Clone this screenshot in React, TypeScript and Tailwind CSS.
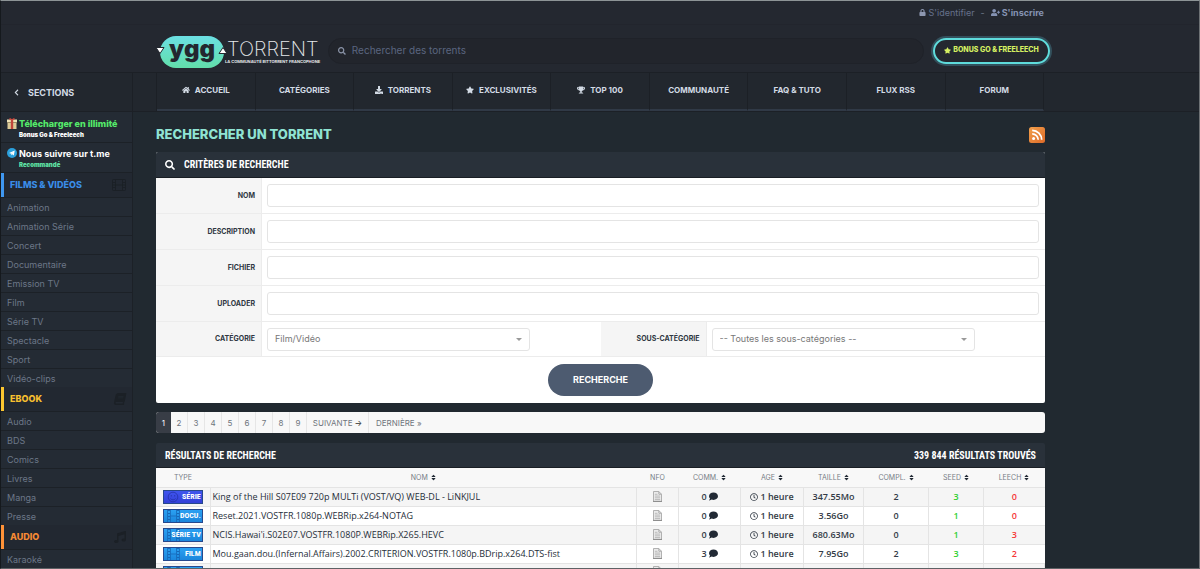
import React from "react";
import {
  FaBook,
  FaChevronLeft,
  FaComment,
  FaDownload,
  FaHome,
  FaLock,
  FaMusic,
  FaRegClock,
  FaSearch,
  FaSort,
  FaStar,
  FaTrophy,
  FaUserPlus,
} from "react-icons/fa";

const navItems: { label: string; icon?: React.ReactNode }[] = [
  { label: "ACCUEIL", icon: <FaHome /> },
  { label: "CATÉGORIES" },
  { label: "TORRENTS", icon: <FaDownload /> },
  { label: "EXCLUSIVITÉS", icon: <FaStar /> },
  { label: "TOP 100", icon: <FaTrophy /> },
  { label: "COMMUNAUTÉ" },
  { label: "FAQ & TUTO" },
  { label: "FLUX RSS" },
  { label: "FORUM" },
];

function FilmStrip() {
  return (
    <svg viewBox="0 0 14 12" className="h-3 w-[14px]" fill="none" stroke="currentColor" aria-hidden="true">
      <rect x=".5" y=".5" width="13" height="11" rx="1" />
      <path d="M3.500.5v11M10.500.5v11M3.500 6h7M.5 3.500h3M.5 6h3M.5 8.500h3M10.500 3.500h3M10.500 6h3M10.500 8.500h3" />
    </svg>
  );
}

const sections = [
  {
    title: "FILMS & VIDÉOS",
    tone: "border-[#3f97f0] text-[#3a8de8]",
    icon: <FilmStrip />,
    items: [
      "Animation",
      "Animation Série",
      "Concert",
      "Documentaire",
      "Emission TV",
      "Film",
      "Série TV",
      "Spectacle",
      "Sport",
      "Vidéo-clips",
    ],
  },
  {
    title: "EBOOK",
    tone: "border-[#fcc630] text-[#f6bf2f]",
    icon: <FaBook className="h-3 w-3 skew-x-[-12deg]" />,
    items: ["Audio", "BDS", "Comics", "Livres", "Manga", "Presse"],
  },
  {
    title: "AUDIO",
    tone: "border-[#ff9238] text-[#f58a34]",
    icon: <FaMusic className="h-3 w-3" />,
    items: ["Karaoké"],
  },
];

const results = [
  { type: "SÉRIE", name: "King of the Hill S07E09 720p MULTi (VOST/VQ) WEB-DL - LiNKJUL", comm: 0, size: "347.55Mo", compl: 2, seed: 3, leech: 0 },
  { type: "DOCU.", name: "Reset.2021.VOSTFR.1080p.WEBRip.x264-NOTAG", comm: 0, size: "3.56Go", compl: 0, seed: 1, leech: 0 },
  { type: "SÉRIE TV", name: "NCIS.Hawai'i.S02E07.VOSTFR.1080P.WEBRip.X265.HEVC", comm: 0, size: "680.63Mo", compl: 0, seed: 1, leech: 3 },
  { type: "FILM", name: "Mou.gaan.dou.(Infernal.Affairs).2002.CRITERION.VOSTFR.1080p.BDrip.x264.DTS-fist", comm: 3, size: "7.95Go", compl: 2, seed: 3, leech: 2 },
];

const columns = [
  { label: "TYPE", width: "w-[54px]" },
  { label: "NOM", width: "", sort: true },
  { label: "NFO", width: "w-[42px]" },
  { label: "COMM.", width: "w-[62px]", sort: true },
  { label: "AGE", width: "w-[63px]", sort: true },
  { label: "TAILLE", width: "w-[60px]", sort: true },
  { label: "COMPL.", width: "w-[65px]", sort: true },
  { label: "SEED", width: "w-[55px]", sort: true },
  { label: "LEECH", width: "w-[61px]", sort: true },
];

function Logo() {
  return (
    <svg viewBox="0 0 162 36" className="h-9 w-[162px] shrink-0 overflow-visible" role="img" aria-label="ygg torrent">
      <defs>
        <linearGradient id="pill" x1="0" y1="0" x2="0" y2="1">
          <stop offset="0" stopColor="#6bdfe3" />
          <stop offset="1" stopColor="#62deaa" />
        </linearGradient>
      </defs>
      <rect x="4" y="3" width="64" height="32" rx="16" fill="url(#pill)" />
      <text x="36" y="24" textAnchor="middle" fontFamily="Inter, sans-serif" fontWeight="900" fontSize="24" fill="#23272f">
        ygg
      </text>
      <path d="M0 14.500h8l-4 6z" fill="#fff" stroke="#23272f" strokeWidth="1" />
      <path d="M63 20.500h8l-4-6z" fill="#fff" stroke="#23272f" strokeWidth="1" />
      <text x="71" y="23" fontFamily="Inter, sans-serif" fontWeight="200" fontSize="20" fill="#e6e8eb">
        TORRENT
      </text>
      <text x="69" y="30" fontFamily="Inter, sans-serif" fontWeight="700" fontSize="4" fill="#e6e8eb">
        LA COMMUNAUTÉ BITTORRENT FRANCOPHONE
      </text>
    </svg>
  );
}

function GiftIcon() {
  return (
    <svg viewBox="0 0 10 11" className="h-[11px] w-[10px] shrink-0" aria-hidden="true">
      <path d="M0 1.500h10v3H0z" fill="#efe3b8" />
      <path d="M.5 4.500h9V11h-9z" fill="#dccb98" />
      <path d="M0 4.300h10v.6H0z" fill="#8f7d55" />
      <path d="M3.800 1h2.400v10H3.800z" fill="#c2453b" />
      <path d="M5 1.800C4 0 2 0 2.200 1S4 1.900 5 1.800s2.600.1 2.800-.8S6 0 5 1.800z" fill="#d9463a" />
    </svg>
  );
}

function TelegramIcon() {
  return (
    <svg viewBox="0 0 20 20" className="h-[10px] w-[10px] shrink-0" aria-hidden="true">
      <circle cx="10" cy="10" r="10" fill="#2ba0dc" />
      <path d="M4 9.800 15.500 5.200 13.600 15l-3.300-2.300-1.700 1.700-.3-2.900-4.300-1.700z" fill="#fff" />
      <path d="m8.300 11.500 5-4.200-4.200 4.600-.5 2.500z" fill="#b9dcf0" />
    </svg>
  );
}

function RssBadge() {
  return (
    <svg viewBox="0 0 16 16" className="h-4 w-4" aria-hidden="true">
      <defs>
        <linearGradient id="rss" x1="0" y1="0" x2="1" y2="1">
          <stop offset="0" stopColor="#f2a04c" />
          <stop offset="1" stopColor="#de6a28" />
        </linearGradient>
      </defs>
      <rect width="16" height="16" rx="2.500" fill="url(#rss)" />
      <circle cx="4.600" cy="11.500" r="1.500" fill="#fff" />
      <path d="M3.200 6.800a6 6 0 0 1 6 6M3.200 3.300a9.500 9.500 0 0 1 9.500 9.500" fill="none" stroke="#fff" strokeWidth="1.700" />
    </svg>
  );
}

function NfoIcon() {
  return (
    <svg viewBox="0 0 10 12" className="h-[11px] w-[9px]" aria-hidden="true">
      <path d="M.5.5h6l3 3v8h-9z" fill="#eee" stroke="#a5a5a5" />
      <path d="M6.500.5v3h3" fill="none" stroke="#a5a5a5" />
      <path d="M2 3.500h3M2 5.500h6M2 7.500h6M2 9.500h6" stroke="#b0b0b0" />
      <path d="M0 11.500h10" stroke="#888" />
    </svg>
  );
}

function TypeBadge({ type }: { type: string }) {
  const animated = type === "SÉRIE";
  return (
    <span
      className={
        "relative flex h-[14px] w-10 items-center justify-end border border-[#27488c] bg-linear-to-b " +
        (animated ? "from-[#3f55ee] to-[#3340d8]" : "from-[#2ba1f2] to-[#1b86dc]")
      }
    >
      <svg viewBox="0 0 38 12" className="absolute inset-0 h-3 w-[38px]" aria-hidden="true">
        {animated ? (
          <g fill="none" stroke="#2432a8" strokeWidth=".8">
            <circle cx="9" cy="6" r="4.800" />
            <path d="M6.500 7.500a3 3 0 0 0 5 0M7.300 4v1.500M10.700 4v1.500" />
          </g>
        ) : (
          <g fill="none" stroke="#1668b8" strokeWidth=".8">
            <path d="M3.500 0v12M6.500 0v12M12.500 0v12M15.500 0v12M6.500 6h6" />
            <path d="M5 0v12M14 0v12" strokeDasharray="1 2" strokeWidth="2" />
          </g>
        )}
      </svg>
      <span className="relative pr-px font-['Roboto_Condensed','Roboto',sans-serif] text-[8px] leading-3 font-bold whitespace-nowrap text-white">
        {type}
      </span>
    </span>
  );
}

const labelStyle =
  "flex w-[106px] shrink-0 items-center justify-end border-r border-[#ececec] bg-[#f5f5f5] pt-px pr-[6px] text-[7px] font-bold text-[#2f3742]";

function Field({ id, label }: { id: string; label: string }) {
  return (
    <div className="flex h-9 border-b border-[#ececec]">
      <label htmlFor={id} className={labelStyle}>
        {label}
      </label>
      <div className="flex flex-1 items-center pr-[6px] pl-[5px]">
        <input id={id} type="text" className="h-[23px] w-full rounded-[3px] border border-[#e4e4e4] bg-white px-2 text-[9px] text-[#666] outline-none" />
      </div>
    </div>
  );
}

function SelectField({ id, label, value }: { id: string; label: string; value: string }) {
  return (
    <div className="flex flex-1">
      <label htmlFor={id} className={labelStyle}>
        {label}
      </label>
      <div className="flex flex-1 items-center pl-[5px]">
        <div className="relative w-[263px]">
          <select id={id} defaultValue={value} className="h-[23px] w-full appearance-none rounded-[3px] border border-[#e4e4e4] bg-white px-[7px] text-[9px] text-[#777] outline-none">
            <option>{value}</option>
          </select>
          <span className="pointer-events-none absolute top-[10px] right-2 border-x-[3px] border-t-[3px] border-x-transparent border-t-[#999]" />
        </div>
      </div>
    </div>
  );
}

const heading = "font-['Roboto_Condensed','Roboto',sans-serif] text-[10px] font-bold text-white";

export default function App() {
  return (
    <div className="flex h-screen flex-col overflow-hidden border border-t-[#8d9496] border-r-[#6d7174] border-b-[#5e6265] border-l-[#15191d] bg-[#212930] font-['Inter',sans-serif] text-[9px] text-[#6c7788]">
      <header className="shrink-0 bg-[#242830]">
        <div className="flex h-6 items-center justify-end gap-[6px] border-b border-[#22252d] px-[155px]">
          <a href="#login" className="flex items-center gap-[3px] text-[#66718b]">
            <FaLock className="h-[7px] w-[7px] text-[#8d97b0]" />
            S'identifier
          </a>
          <span>-</span>
          <a href="#register" className="flex items-center gap-[2px] font-bold text-[#8593b3]">
            <FaUserPlus className="h-[9px] w-[9px]" />
            S'inscrire
          </a>
        </div>
        <div className="flex h-[47px] items-center px-[155px] pt-[4px]">
          <a href="#home">
            <Logo />
          </a>
          <label className="ml-[10px] flex h-[26px] flex-1 items-center gap-[6px] rounded-full border border-[#1f2229] bg-[#22252c] px-[9px]">
            <FaSearch className="h-2 w-2 text-[#8b94a8]" />
            <input
              type="search"
              aria-label="Rechercher des torrents"
              placeholder="Rechercher des torrents"
              className="w-full bg-transparent text-[10px] outline-none placeholder:text-[#5b6680]"
            />
          </label>
          <a
            href="#bonus"
            className="-mr-[6px] ml-[9px] flex h-[26px] w-[117px] items-center justify-center gap-[2px] rounded-full border-2 border-[#5fdcdc] text-[7px] font-extrabold text-[#d5f062] ring-2 ring-[#33505c]"
          >
            <FaStar className="h-[7px] w-[7px]" />
            BONUS GO &amp; FREELEECH
          </a>
        </div>
        <div className="grid h-10 grid-cols-[132px_1fr_131px] border-y border-[#1c2026] bg-[#22272e]">
          <button type="button" className="flex items-center gap-[8px] border-r border-[#1c2026] pt-px pl-[12px] text-[9px] font-bold text-[#d3dbe5]">
            <FaChevronLeft className="h-[7px] w-[7px]" />
            SECTIONS
          </button>
          <nav className="mr-[24px] ml-[23px] flex border-l border-[#1c2026]">
            {navItems.map((item) => (
              <a
                key={item.label}
                href="#nav"
                className="flex flex-1 items-center justify-center gap-[5px] border-r border-b-2 border-r-[#1c2026] border-b-[#303946] pb-[2px] text-[8px] font-bold text-[#d3dbe5]"
              >
                {item.icon}
                {item.label}
              </a>
            ))}
          </nav>
        </div>
      </header>

      <div className="grid min-h-0 flex-1 grid-cols-[132px_1fr_131px]">
        <aside className="border-r border-[#1c2127] bg-[#242b34]">
          <a href="#bonus" className="flex h-[31px] gap-[2px] border-b border-[#1c2127] pt-[6px] pl-[6px]">
            <GiftIcon />
            <span className="flex flex-col text-[9px] leading-[11px] font-extrabold text-[#55ea6a]">
              Télécharger en illimité
              <span className="text-[6px] font-black text-white">Bonus Go &amp; Freeleech</span>
            </span>
          </a>
          <a href="#telegram" className="flex h-[30px] gap-[2px] border-b border-[#1c2127] pt-[5px] pl-[6px]">
            <TelegramIcon />
            <span className="flex flex-col text-[9px] leading-[11px] font-bold text-white">
              Nous suivre sur t.me
              <span className="text-[6px] font-black text-[#5fe3a5]">Recommandé</span>
            </span>
          </a>
          {sections.map((section) => (
            <section key={section.title}>
              <h2 className={"flex h-6 items-center justify-between border-l-3 bg-[#222831] pr-[6px] pl-[6px] text-[9px] font-extrabold " + section.tone}>
                {section.title}
                <span className="text-[#1b2026]">{section.icon}</span>
              </h2>
              <ul>
                {section.items.map((item) => (
                  <li key={item} className="h-[19px] border-t border-[#1c2127] pt-[3px] pl-[6px] text-[9px] leading-[14px]">
                    <a href="#category">{item}</a>
                  </li>
                ))}
              </ul>
            </section>
          ))}
        </aside>

        <main className="mr-[23px] ml-[23px] flex flex-col">
          <div className="flex h-[40px] items-center justify-between pt-[5px]">
            <h1 className="text-[13px] font-extrabold text-[#8fe3d3]">RECHERCHER UN TORRENT</h1>
            <a href="#rss" aria-label="Flux RSS" className="pt-px">
              <RssBadge />
            </a>
          </div>

          <form className="overflow-hidden rounded-[2px] bg-white" onSubmit={(e) => e.preventDefault()}>
            <h2 className={"flex h-[26px] items-center gap-[9px] border-b border-[#191e24] bg-[#29313a] pl-[9px] " + heading}>
              <FaSearch className="h-[10px] w-[10px]" />
              CRITÈRES DE RECHERCHE
            </h2>
            <Field id="name" label="NOM" />
            <Field id="description" label="DESCRIPTION" />
            <Field id="file" label="FICHIER" />
            <Field id="uploader" label="UPLOADER" />
            <div className="flex h-[35px] border-b border-[#ececec]">
              <SelectField id="category" label="CATÉGORIE" value="Film/Vidéo" />
              <SelectField id="subcategory" label="SOUS-CATÉGORIE" value="-- Toutes les sous-catégories --" />
            </div>
            <div className="flex h-[46px] items-center justify-center">
              <button type="submit" className="h-8 w-[105px] rounded-full bg-[#4d5b70] text-[9px] font-bold text-white">
                RECHERCHE
              </button>
            </div>
          </form>

          <nav aria-label="Pagination" className="mt-[9px] flex h-[21px] shrink-0 overflow-hidden rounded-[3px] bg-[#f8f8f8] text-[8px] text-[#6f757d]">
            <span className="flex w-[15px] items-center justify-center bg-[#383d46] text-white">1</span>
            {["2", "3", "4", "5", "6", "7", "8", "9"].map((page) => (
              <a key={page} href="#page" className="flex w-[17px] items-center justify-center border-r border-[#e6e6e6]">
                {page}
              </a>
            ))}
            <a href="#next" className="flex w-[62px] items-center justify-center gap-[2px] border-r border-[#e6e6e6]">
              SUIVANTE <span className="text-[#333]">→</span>
            </a>
            <a href="#last" className="flex items-center px-[7px]">
              DERNIÈRE »
            </a>
          </nav>

          <section className="mt-[10px]">
            <div className={"flex h-[25px] items-center justify-between rounded-t-[2px] border-b border-[#191e24] bg-[#29313a] px-[9px] " + heading}>
              <h2>RÉSULTATS DE RECHERCHE</h2>
              <span>339 844 RÉSULTATS TROUVÉS</span>
            </div>
            <table className="w-full table-fixed border-collapse bg-white text-center font-['Open_Sans',sans-serif] text-[9px] font-semibold text-[#333b46]">
              <thead>
                <tr className="h-[19px] bg-[#f8f8f8] font-['Inter',sans-serif] text-[7px] text-[#777d86]">
                  {columns.map((column) => (
                    <th key={column.label} className={"p-0 pt-px font-normal " + column.width}>
                      <span className="flex items-center justify-center gap-[3px]">
                        {column.label}
                        {column.sort && <FaSort className="h-[7px] w-[5px] text-[#222a35]" />}
                      </span>
                    </th>
                  ))}
                </tr>
              </thead>
              <tbody>
                {results.map((row) => (
                  <tr
                    key={row.name}
                    className="h-[19px] border-t border-[#e4e4e4] odd:bg-[#f5f5f5] [&>td]:border-r [&>td]:border-[#e4e4e4] [&>td]:p-0 [&>td]:leading-[14px] [&>td:last-child]:border-r-0"
                  >
                    <td>
                      <span className="flex justify-center">
                        <TypeBadge type={row.type} />
                      </span>
                    </td>
                    <td className="text-left font-medium whitespace-nowrap text-[#262e39]">
                      <a href="#torrent" className="pl-[2px]">
                        {row.name}
                      </a>
                    </td>
                    <td>
                      <span className="flex justify-center">
                        <NfoIcon />
                      </span>
                    </td>
                    <td>
                      <span className="flex items-center justify-center gap-[2px]">
                        {row.comm}
                        <FaComment className="h-[9px] w-[9px] text-[#222a35]" />
                      </span>
                    </td>
                    <td>
                      <span className="flex items-center justify-center gap-[2px]">
                        <FaRegClock className="h-2 w-2" />1 heure
                      </span>
                    </td>
                    <td>{row.size}</td>
                    <td>{row.compl}</td>
                    <td className="text-[#2fd02f]">{row.seed}</td>
                    <td className="text-[#f53636]">{row.leech}</td>
                  </tr>
                ))}
              </tbody>
              <tfoot>
                <tr className="h-[19px] border-t border-[#e4e4e4] bg-[#f5f5f5] align-top [&>td]:border-r [&>td]:border-[#e4e4e4] [&>td]:p-0 [&>td]:pt-[2px]">
                  <td>
                    <span className="flex justify-center">
                      <TypeBadge type="" />
                    </span>
                  </td>
                  <td />
                  <td>
                    <span className="flex justify-center">
                      <NfoIcon />
                    </span>
                  </td>
                  <td />
                  <td />
                  <td />
                  <td />
                  <td />
                  <td />
                </tr>
              </tfoot>
            </table>
          </section>
        </main>
      </div>
    </div>
  );
}
